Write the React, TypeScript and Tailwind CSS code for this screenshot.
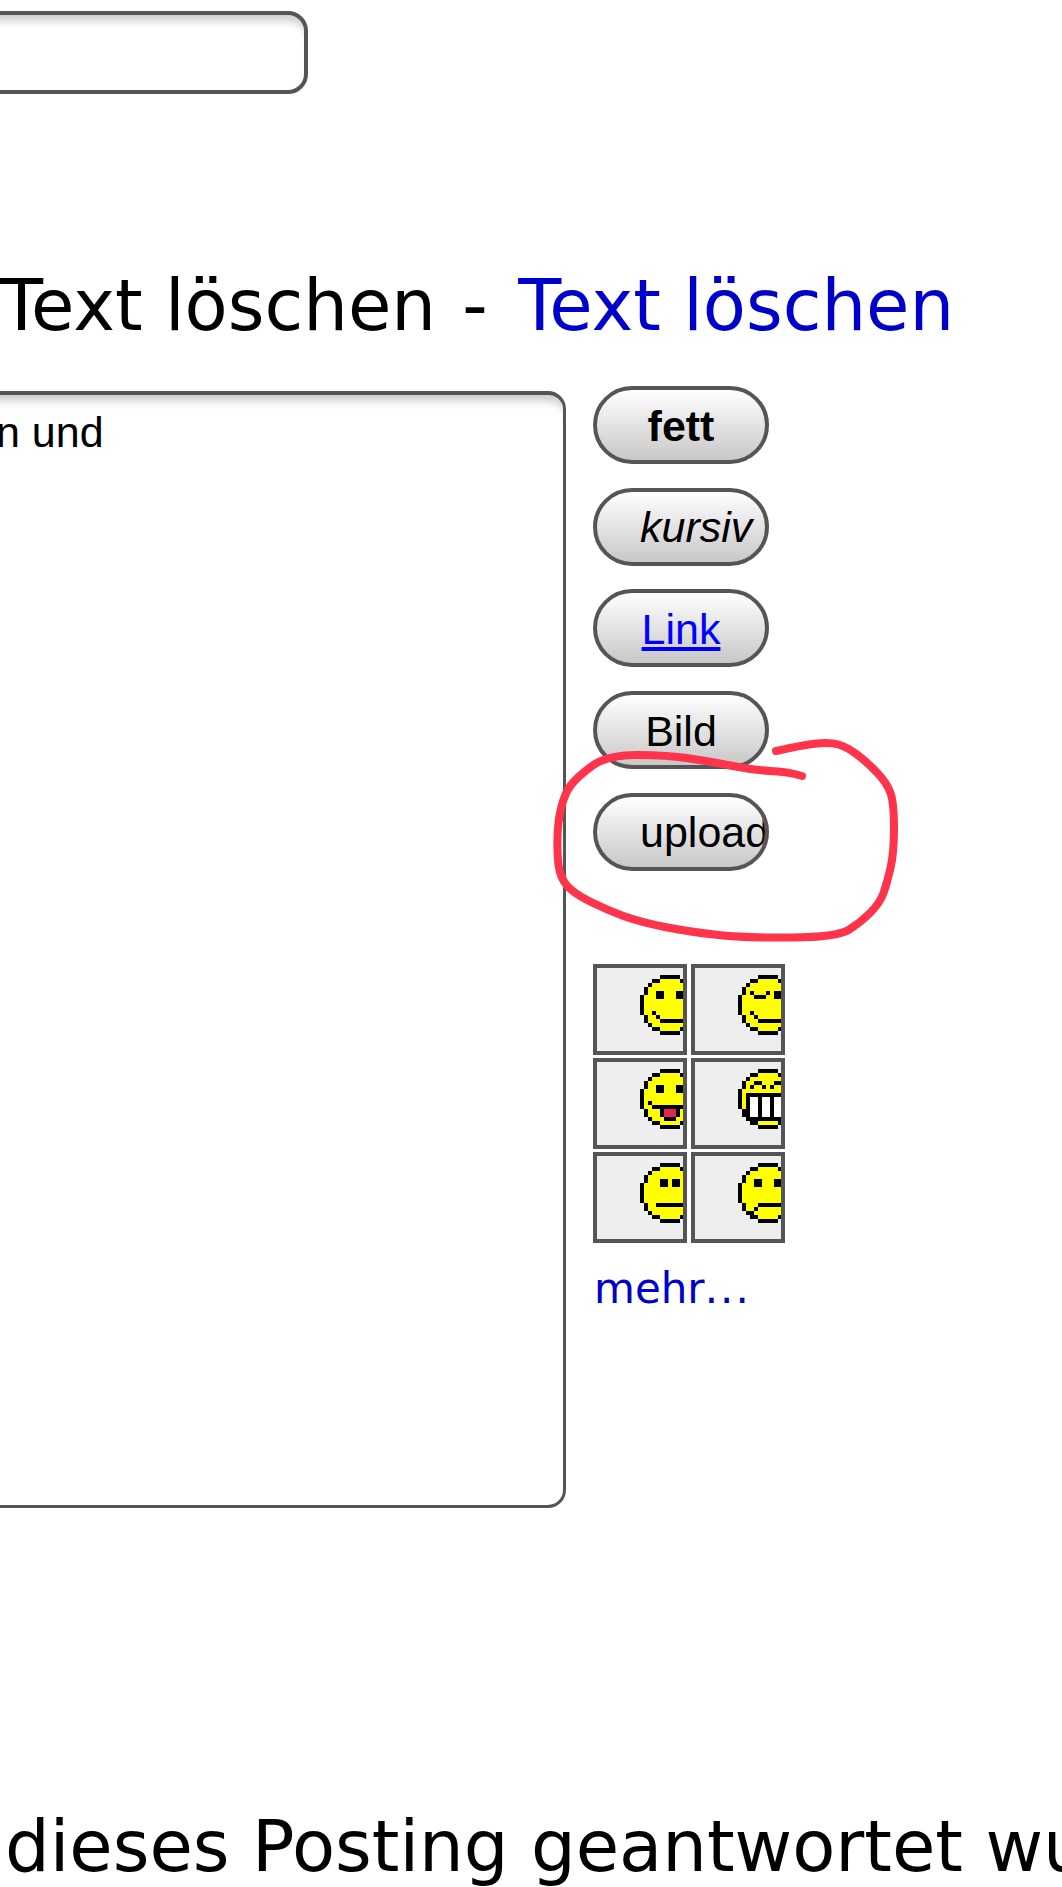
const FONT_VERDANA = "font-['DejaVu_Sans',sans-serif]";
const FONT_HELV = "font-['Liberation_Sans',Arial,sans-serif]";

type Px = [number, number, string];

const K = '#000000';
const Y = '#ffff00';
const R = '#e0264f';
const W = '#ffffff';

const OUTLINE = [
  '.....#####.....',
  '...##ooooo##...',
  '..#ooooooooo#..',
  '.#ooooooooooo#.',
  '.#ooooooooooo#.',
  '#ooooooooooooo#',
  '#ooooooooooooo#',
  '#ooooooooooooo#',
  '#ooooooooooooo#',
  '#ooooooooooooo#',
  '.#ooooooooooo#.',
  '.#ooooooooooo#.',
  '..#ooooooooo#..',
  '...##ooooo##...',
  '.....#####.....',
];

const eye = (x: number, y = 4): Px[] => [
  [x, y, K],
  [x + 1, y, K],
  [x, y + 1, K],
  [x + 1, y + 1, K],
];

const line = (from: number, to: number, y: number, color = K): Px[] =>
  Array.from({ length: to - from + 1 }, (_, i) => [from + i, y, color] as Px);

const smileMouth: Px[] = [[3, 9, K], [4, 10, K], ...line(5, 10, 11), [11, 10, K], [12, 9, K]];

const FACES: Px[][] = [
  [...eye(4), ...eye(9), ...smileMouth],
  [[3, 4, K], ...line(4, 6, 5), [7, 4, K], ...eye(9), ...smileMouth],
  [
    ...eye(4),
    ...eye(9),
    [2, 8, K],
    ...line(3, 12, 9),
    [5, 10, K],
    ...line(6, 8, 10, R),
    [9, 10, K],
    [5, 11, K],
    ...line(6, 8, 11, R),
    [9, 11, K],
    ...line(6, 8, 12),
  ],
  [
    [3, 4, K],
    ...line(4, 5, 3),
    [6, 4, K],
    [8, 4, K],
    ...line(9, 10, 3),
    ...line(2, 13, 6),
    ...[7, 8, 9, 10, 11].flatMap((y) => [
      [2, y, K] as Px,
      ...line(3, 4, y, W),
      [5, y, K] as Px,
      ...line(6, 7, y, W),
      [8, y, K] as Px,
      ...line(9, 10, y, W),
      [11, y, K] as Px,
    ]),
    ...line(3, 11, 12),
  ],
  [...eye(5), ...eye(8), ...line(4, 11, 10)],
  [...eye(4), ...eye(9), ...line(5, 10, 10), [4, 11, K], [3, 12, K], [11, 11, K], [12, 12, K]],
];

// freehand stroke, sampled from the picture
const SCRIBBLE: [number, number][] = [
  [776, 751], [803, 745], [830, 742], [847, 747], [867, 762], [887, 783], [894, 803],
  [894, 853], [887, 883], [880, 903], [860, 923], [837, 937], [747, 938], [690, 932],
  [640, 922], [607, 910], [573, 893], [560, 877], [557, 853], [558, 820], [565, 793],
  [577, 777], [607, 755], [667, 755], [713, 762], [753, 770], [787, 772], [802, 776],
];

function smoothPath(points: [number, number][]) {
  let d = `M${points[0][0]} ${points[0][1]}`;
  for (let i = 1; i < points.length - 1; i++) {
    const [x, y] = points[i];
    const [nx, ny] = points[i + 1];
    d += ` Q${x} ${y} ${(x + nx) / 2} ${(y + ny) / 2}`;
  }
  const last = points[points.length - 1];
  return `${d} L${last[0]} ${last[1]}`;
}

function Smiley({ pixels }: { pixels: Px[] }) {
  return (
    <svg viewBox="0 0 15 15" className="h-[60px] w-[60px] shrink-0" shapeRendering="crispEdges">
      {OUTLINE.flatMap((row, y) =>
        row.split('').map((c, x) =>
          c === '.' ? null : <rect key={`${x}-${y}`} x={x} y={y} width="1" height="1" fill={c === '#' ? K : Y} />,
        ),
      )}
      {pixels.map(([x, y, color], i) => (
        <rect key={i} x={x} y={y} width="1" height="1" fill={color} />
      ))}
    </svg>
  );
}

function PillButton({ children }: { children: React.ReactNode }) {
  return (
    <button
      className={`block h-[78px] w-[176px] overflow-hidden whitespace-nowrap rounded-full border-[4px] border-[#555] bg-gradient-to-b from-white to-[#c8c8c8] px-[43px] pt-[2px] text-center text-[43px] leading-none text-black ${FONT_HELV}`}
    >
      {children}
    </button>
  );
}

export default function App() {
  return (
    <div className="relative h-[1887px] w-[1062px] overflow-hidden bg-white text-black">
      {/* subject input, cut off on the left */}
      <div className="pt-[11px]">
        <div className="-ml-[20px] h-[83px] w-[328px] rounded-[20px] border-[4px] border-[#555] bg-white shadow-[inset_0_12px_8px_-6px_rgba(0,0,0,0.2)]" />
      </div>

      <p className={`mt-[166px] h-[109px] whitespace-nowrap text-[70.5px] leading-[92px] ${FONT_VERDANA}`}>
        Text löschen<span className="ml-[4px] mr-[8px]"> - </span>
        <a className="text-[#0000cc]">Text löschen</a>
      </p>

      <div className="mt-[17px] flex items-start gap-[27px]">
        {/* message box */}
        <div className="-ml-[20px] mt-[5px] h-[1117px] w-[586px] rounded-[18px] border-[3px] border-t-4 border-[#555] bg-white pl-[13px] pt-[13px] shadow-[inset_0_12px_8px_-6px_rgba(0,0,0,0.2)]">
          <div className={`text-[43px] leading-[48px] ${FONT_HELV}`}>n und</div>
        </div>

        <div className="w-[200px]">
          <div className="flex flex-col gap-[23.7px]">
            <PillButton>
              <b>fett</b>
            </PillButton>
            <PillButton>
              <i>kursiv</i>
            </PillButton>
            <PillButton>
              <span className="text-[#0000ff] underline">Link</span>
            </PillButton>
            <PillButton>Bild</PillButton>
            <PillButton>upload</PillButton>
          </div>

          <div className="mt-[93px] grid w-[192px] grid-cols-[94px_94px] gap-x-[4px] gap-y-[3px]">
            {FACES.map((pixels, i) => (
              <div key={i} className="h-[91px] overflow-hidden border-[4px] border-[#555] bg-[#eee] pl-[43px] pt-[7px]">
                <Smiley pixels={pixels} />
              </div>
            ))}
          </div>

          <a className={`mt-[21px] block pl-[1px] text-[42px] leading-[50px] text-[#0000cc] ${FONT_VERDANA}`}>
            mehr<span className="tracking-[0.05em]">...</span>
          </a>
        </div>
      </div>

      <p className={`mt-[293px] whitespace-nowrap pl-[5px] text-[70.5px] leading-[92px] ${FONT_VERDANA}`}>
        dieses Posting geantwortet wurde
      </p>

      {/* red freehand circle drawn over the screenshot */}
      <svg viewBox="0 0 1062 1887" className="pointer-events-none absolute left-0 top-0 h-[1887px] w-[1062px]" fill="none">
        <path d={smoothPath(SCRIBBLE)} stroke="#ff3349" strokeWidth="8" strokeLinecap="round" strokeLinejoin="round" />
      </svg>
    </div>
  );
}
